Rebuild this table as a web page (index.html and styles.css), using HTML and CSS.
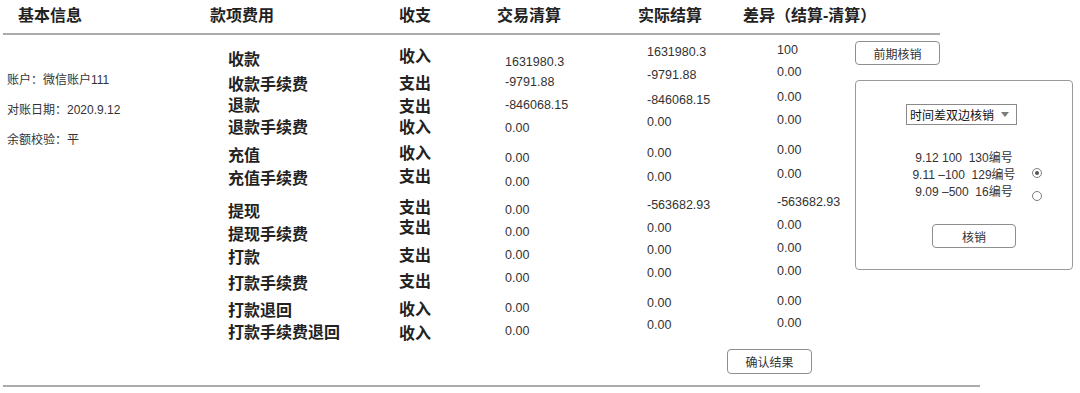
FILE: index.html
```html
<!DOCTYPE html>
<html lang="zh-CN">
<head>
<meta charset="utf-8">
<title>对账结果</title>
<link rel="stylesheet" href="styles.css">
</head>
<body>
<div class="page">
  <div class="head">
    <div>基本信息</div>
    <div>款项费用</div>
    <div>收支</div>
    <div>交易清算</div>
    <div>实际结算</div>
    <div>差异（结算-清算）</div>
  </div>
  <div class="body">
    <div class="info">
      <p>账户：微信账户111</p>
      <p>对账日期：2020.9.12</p>
      <p>余额校验：平</p>
    </div>
    <div class="col col-item">
      <div>收款</div><div>收款手续费</div><div>退款</div><div>退款手续费</div>
      <div>充值</div><div>充值手续费</div><div>提现</div><div>提现手续费</div>
      <div>打款</div><div>打款手续费</div><div>打款退回</div><div>打款手续费退回</div>
    </div>
    <div class="col col-dir">
      <div>收入</div><div>支出</div><div>支出</div><div>收入</div>
      <div>收入</div><div>支出</div><div>支出</div><div>支出</div>
      <div>支出</div><div>支出</div><div>收入</div><div>收入</div>
    </div>
    <div class="col num col-trade">
      <div>1631980.3</div><div>-9791.88</div><div>-846068.15</div><div>0.00</div>
      <div>0.00</div><div>0.00</div><div>0.00</div><div>0.00</div>
      <div>0.00</div><div>0.00</div><div>0.00</div><div>0.00</div>
    </div>
    <div class="col num col-actual">
      <div>1631980.3</div><div>-9791.88</div><div>-846068.15</div><div>0.00</div>
      <div>0.00</div><div>0.00</div><div>-563682.93</div><div>0.00</div>
      <div>0.00</div><div>0.00</div><div>0.00</div><div>0.00</div>
    </div>
    <div class="col num col-diff">
      <div>100</div><div>0.00</div><div>0.00</div><div>0.00</div>
      <div>0.00</div><div>0.00</div><div>-563682.93</div><div>0.00</div>
      <div>0.00</div><div>0.00</div><div>0.00</div><div>0.00</div>
    </div>
    <div class="side">
      <button class="btn btn-prev">前期核销</button>
      <div class="panel">
        <div class="select"><span>时间差双边核销</span><i class="caret"></i></div>
        <div class="pick">
          <div></div>
          <div class="pick-list">
            <div>9.12 100&nbsp; 130编号</div>
            <div>9.11 –100&nbsp; 129编号</div>
            <div>9.09 –500&nbsp; 16编号</div>
          </div>
          <div class="radios">
            <span class="radio on"></span>
            <span class="radio"></span>
          </div>
        </div>
        <button class="btn btn-settle">核销</button>
      </div>
    </div>
  </div>
  <div class="foot">
    <button class="btn btn-confirm">确认结果</button>
  </div>
  <div class="rule"></div>
</div>
</body>
</html>
```
FILE: styles.css
```css
* {
  box-sizing: border-box;
  margin: 0;
  padding: 0;
}

body {
  margin: 0;
  background: #ffffff;
  color: #333333;
  font-family: "Liberation Sans", "Noto Sans CJK SC", sans-serif;
}

.page {
  width: 1080px;
  height: 393px;
  overflow: hidden;
}

.head {
  display: grid;
  grid-template-columns: 192px 189px 98px 141px 105px auto;
  margin-left: 3px;
  width: 937px;
  height: 35px;
  padding: 5px 0 0 15px;
  border-bottom: 2px solid #ababab;
  font-size: 16px;
  font-weight: 700;
  line-height: 22px;
  color: #222222;
  white-space: nowrap;
}

.body {
  display: grid;
  grid-template-columns: 221px 171px 106px 142px 130px 78px 218px;
  padding-left: 7px;
  height: 308px;
}

.info {
  display: flex;
  flex-direction: column;
  gap: 14px;
  padding-top: 37px;
  font-size: 12px;
  line-height: 16px;
  color: #333333;
}

.col {
  display: grid;
  align-content: start;
  white-space: nowrap;
}

.col-item,
.col-dir {
  font-size: 16px;
  font-weight: 700;
  line-height: 20px;
  color: #222222;
}

.col-item {
  padding-top: 15px;
  grid-template-rows: 25px 21px 22px 28px 23px 33px 23px 23px 26px 27px 22px 20px;
}

.col-dir {
  padding-top: 12px;
  grid-template-rows: 27px 23px 21px 26px 23px 31px 20px 28px 26px 28px 24px 20px;
}

.num {
  font-size: 12.5px;
  line-height: 16px;
  color: #333333;
}

.col-trade {
  padding-top: 19px;
  grid-template-rows: 20px 23px 23px 30px 24px 28px 22px 23px 23px 30px 23px 16px;
}

.col-actual {
  padding-top: 9px;
  grid-template-rows: 23px 25px 22px 31px 24px 28px 23px 22px 23px 30px 22px 16px;
}

.col-diff {
  padding-top: 7px;
  grid-template-rows: 22px 25px 23px 30px 24px 28px 23px 23px 23px 30px 22px 16px;
}

.side {
  display: flex;
  flex-direction: column;
  align-items: flex-start;
  padding-top: 6px;
}

.btn {
  font-family: "Liberation Sans", "Noto Sans CJK SC", sans-serif;
  font-size: 12px;
  color: #333333;
  background: #ffffff;
  border: 1px solid #8e8e8e;
  border-radius: 4px;
}

.btn-prev {
  width: 85px;
  height: 24px;
}

.panel {
  display: flex;
  flex-direction: column;
  align-items: flex-start;
  margin-top: 15px;
  width: 218px;
  height: 190px;
  padding-top: 23px;
  border: 1px solid #9a9a9a;
  border-radius: 4px;
}

.select {
  display: flex;
  align-items: center;
  justify-content: space-between;
  margin-left: 50px;
  width: 111px;
  height: 21px;
  padding: 0 7px 0 3px;
  border: 1px solid #8a8a8a;
  font-size: 12px;
  color: #111111;
}

.caret {
  width: 0;
  height: 0;
  border-left: 4px solid transparent;
  border-right: 4px solid transparent;
  border-top: 5px solid #7a7a7a;
}

.pick {
  display: grid;
  grid-template-columns: 1fr auto 1fr;
  align-self: stretch;
  margin-top: 25px;
}

.pick-list {
  font-size: 12px;
  line-height: 17px;
  text-align: center;
  color: #333333;
  white-space: nowrap;
}

.radios {
  display: flex;
  flex-direction: column;
  gap: 13px;
  padding: 18px 0 0 16px;
}

.radio {
  display: flex;
  align-items: center;
  justify-content: center;
  width: 10px;
  height: 10px;
  border: 1px solid #7d7d7d;
  border-radius: 50%;
}

.radio.on::after {
  content: "";
  width: 4px;
  height: 4px;
  border-radius: 50%;
  background: #555555;
}

.btn-settle {
  margin-top: 23px;
  margin-left: 76px;
  width: 84px;
  height: 24px;
}

.foot {
  padding: 6px 0 0 727px;
}

.btn-confirm {
  width: 85px;
  height: 25px;
}

.rule {
  margin: 11px 0 0 3px;
  width: 977px;
  height: 2px;
  background: #ababab;
}
```
